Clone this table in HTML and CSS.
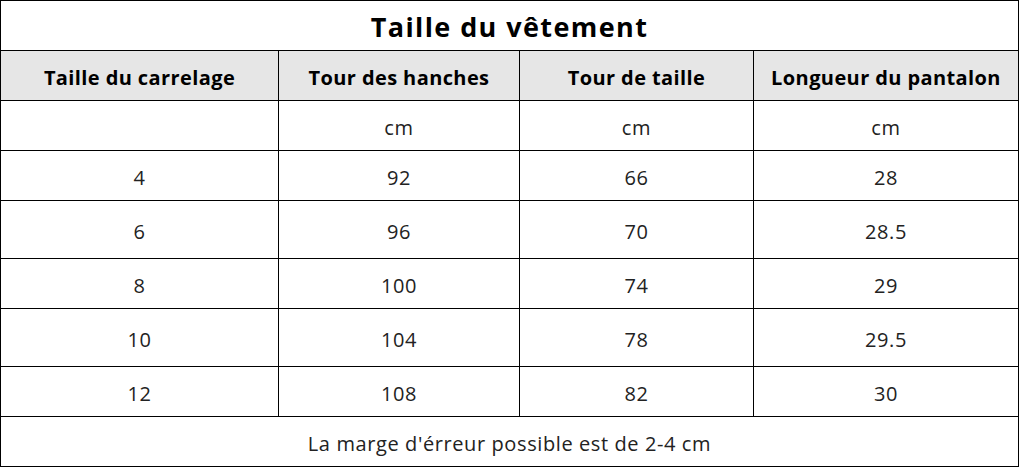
FILE: index.html
```html
<!DOCTYPE html>
<html lang="fr">
<head>
<meta charset="utf-8">
<title>Taille du vêtement</title>
<link rel="stylesheet" href="styles.css">
</head>
<body>
<div class="chart">
  <div class="cell title">Taille du vêtement</div>
  <div class="cell head">Taille du carrelage</div>
  <div class="cell head">Tour des hanches</div>
  <div class="cell head">Tour de taille</div>
  <div class="cell head">Longueur du pantalon</div>
  <div class="cell"></div>
  <div class="cell">cm</div>
  <div class="cell">cm</div>
  <div class="cell">cm</div>
  <div class="cell">4</div>
  <div class="cell">92</div>
  <div class="cell">66</div>
  <div class="cell">28</div>
  <div class="cell">6</div>
  <div class="cell">96</div>
  <div class="cell">70</div>
  <div class="cell">28.5</div>
  <div class="cell">8</div>
  <div class="cell">100</div>
  <div class="cell">74</div>
  <div class="cell">29</div>
  <div class="cell">10</div>
  <div class="cell">104</div>
  <div class="cell">78</div>
  <div class="cell">29.5</div>
  <div class="cell">12</div>
  <div class="cell">108</div>
  <div class="cell">82</div>
  <div class="cell">30</div>
  <div class="cell note">La marge d'érreur possible est de 2-4 cm</div>
</div>
</body>
</html>
```
FILE: styles.css
```css
html, body {
  margin: 0;
  padding: 0;
  background: #ffffff;
}

.chart {
  width: 1019px;
  height: 467px;
  box-sizing: border-box;
  padding: 1px;
  background: #000000;
  display: grid;
  grid-template-columns: 277px 240px 233px 264px;
  grid-template-rows: 49px 49px 49px 49px 57px 49px 57px 49px 49px;
  gap: 1px;
  font-family: "Open Sans", "Noto Sans CJK SC", sans-serif;
}

.cell {
  background: #ffffff;
  display: flex;
  align-items: center;
  justify-content: center;
  font-size: 20px;
  letter-spacing: 0.6px;
  color: #222222;
  padding-top: 3px;
  box-sizing: border-box;
}

.title {
  grid-column: 1 / -1;
  font-size: 27px;
  letter-spacing: 1.4px;
  font-weight: 700;
  color: #000000;
  padding-top: 2px;
}

.head {
  background: #e6e6e6;
  font-weight: 700;
  font-size: 20px;
  letter-spacing: 0.4px;
  color: #000000;
}

.note {
  grid-column: 1 / -1;
}
```
